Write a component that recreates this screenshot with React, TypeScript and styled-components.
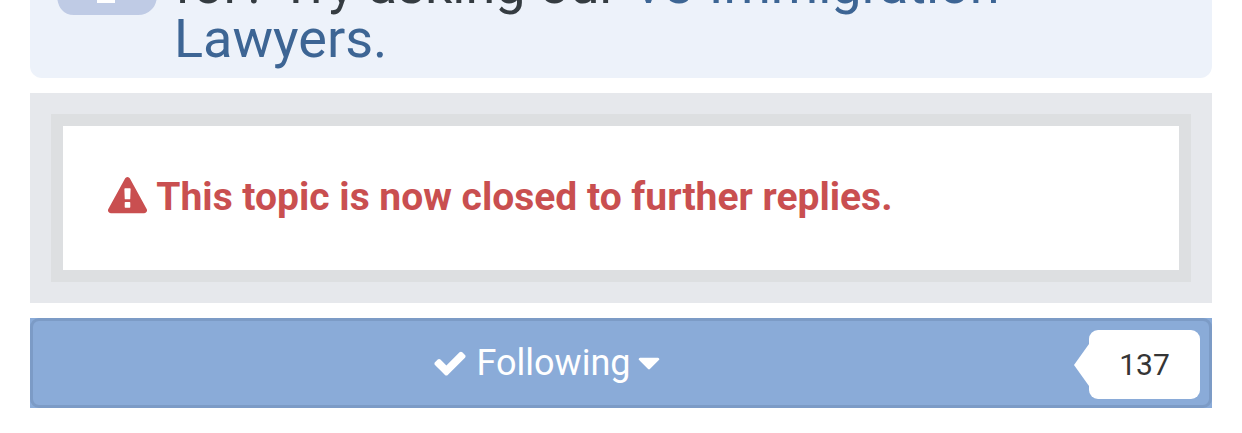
import styled, { createGlobalStyle } from 'styled-components';

const GlobalStyle = createGlobalStyle`
  * {
    box-sizing: border-box;
  }

  body {
    margin: 0;
    background: #ffffff;
    font-family: Roboto, sans-serif;
    overflow: hidden;
  }
`;

const Page = styled.main`
  display: flex;
  flex-direction: column;
  height: 433px;
  padding: 0 30px;
`;

const Banner = styled.section`
  display: flex;
  align-items: flex-end;
  height: 78px;
  padding: 0 27px 12px;
  border-radius: 0 0 12px 12px;
  background: #edf2fa;
  overflow: hidden;
`;

const InfoIcon = styled.svg`
  flex: none;
  width: 100px;
  height: 100px;
  margin: 0 17px 51px 0;
`;

const BannerText = styled.p`
  margin: 0;
  color: #353c41;
  font-size: 54px;
  line-height: 54px;
  white-space: nowrap;
`;

const BannerLine = styled.span`
  display: block;
`;

const BannerLink = styled.a`
  color: #3d6594;
`;

const Notice = styled.section`
  height: 210px;
  margin-top: 15px;
  padding: 21px;
  background: #e6e8ec;
`;

const NoticeBox = styled.div`
  display: flex;
  align-items: center;
  height: 168px;
  padding: 0 45px 3px;
  border: 12px solid #dddfe1;
  background: #ffffff;
  color: #c94f50;
`;

const NoticeText = styled.strong`
  margin-left: 9.3px;
  font-size: 39px;
  font-weight: 700;
  line-height: 58px;
  white-space: nowrap;
`;

const FollowBar = styled.section`
  height: 90px;
  margin-top: 15px;
  background: #8aabd8;
`;

const FollowButton = styled.div`
  display: flex;
  align-items: center;
  height: 90px;
  padding: 0 9px;
  border: 3px solid #7c9bc6;
  border-radius: 9px;
`;

const FollowLabel = styled.div`
  display: flex;
  flex: 1;
  align-items: center;
  justify-content: center;
  padding-right: 17px;
  color: #ffffff;
  font-size: 36px;
  line-height: 54px;
`;

const LabelText = styled.span`
  margin-left: 8px;
`;

const Icon = styled.svg<{ $size: number }>`
  flex: none;
  width: ${({ $size }) => $size}px;
  height: ${({ $size }) => $size}px;
  margin-bottom: 1px;
  fill: currentColor;
`;

const Count = styled.div`
  display: flex;
  align-items: center;
  padding-top: 2px;
  color: #353535;
  font-size: 30px;
`;

const CountArrow = styled.svg`
  width: 15px;
  height: 42px;
  margin-top: 1px;
  fill: #ffffff;
`;

const CountBox = styled.span`
  width: 111px;
  height: 69px;
  border-radius: 9px;
  background: #ffffff;
  line-height: 69px;
  text-align: center;
`;

export default function App() {
  return (
    <>
      <GlobalStyle />
      <Page>
        <Banner>
          <InfoIcon viewBox="0 0 100 100">
            <path
              d="M0 0h100v82q-1 9-6 13-5 5-13 5H17q-8 0-12-5-4-4-5-13z"
              fill="#bfcbe5"
            />
            <path d="M42 45h13v36h3v7H40v-7h4V52h-2zM44 24h10v11H44z" fill="#fff" />
          </InfoIcon>
          <BannerText>
            <BannerLine>
              for? Try asking our <BannerLink>VJ Immigration</BannerLink>
            </BannerLine>
            <BannerLine>
              <BannerLink>Lawyers.</BannerLink>
            </BannerLine>
          </BannerText>
        </Banner>

        <Notice>
          <NoticeBox>
            <Icon $size={39} viewBox="0 0 1792 1792">
              <path d="M1024 1375v-190q0-14-9.5-23.5t-22.5-9.5h-192q-13 0-22.5 9.5t-9.5 23.5v190q0 14 9.5 23.5t22.5 9.5h192q13 0 22.5-9.5t9.5-23.5zm-2-374l18-459q0-12-10-19-13-11-24-11h-220q-11 0-24 11-10 7-10 21l17 457q0 10 10 16.5t24 6.5h185q14 0 23.5-6.5t10.5-16.5zm-14-934l768 1408q35 63-2 126-17 29-46.5 46t-63.5 17h-1536q-34 0-63.5-17t-46.5-46q-37-63-2-126l768-1408q17-31 47-49t65-18 65 18 47 49z" />
            </Icon>
            <NoticeText>This topic is now closed to further replies.</NoticeText>
          </NoticeBox>
        </Notice>

        <FollowBar>
          <FollowButton>
            <FollowLabel>
              <Icon $size={36} viewBox="0 0 1792 1792">
                <path d="M1671 566q0 40-28 68l-724 724-136 136q-28 28-68 28t-68-28l-136-136-362-362q-28-28-28-68t28-68l136-136q28-28 68-28t68 28l294 295 656-657q28-28 68-28t68 28l136 136q28 28 28 68z" />
              </Icon>
              <LabelText>Following</LabelText>
              <Icon $size={36} viewBox="0 0 1792 1792">
                <path d="M1408 704q0 26-19 45l-448 448q-19 19-45 19t-45-19l-448-448q-19-19-19-45t19-45 45-19h896q26 0 45 19t19 45z" />
              </Icon>
            </FollowLabel>
            <Count>
              <CountArrow viewBox="0 0 15 42">
                <path d="M15 0v42L0 21z" />
              </CountArrow>
              <CountBox>137</CountBox>
            </Count>
          </FollowButton>
        </FollowBar>
      </Page>
    </>
  );
}
